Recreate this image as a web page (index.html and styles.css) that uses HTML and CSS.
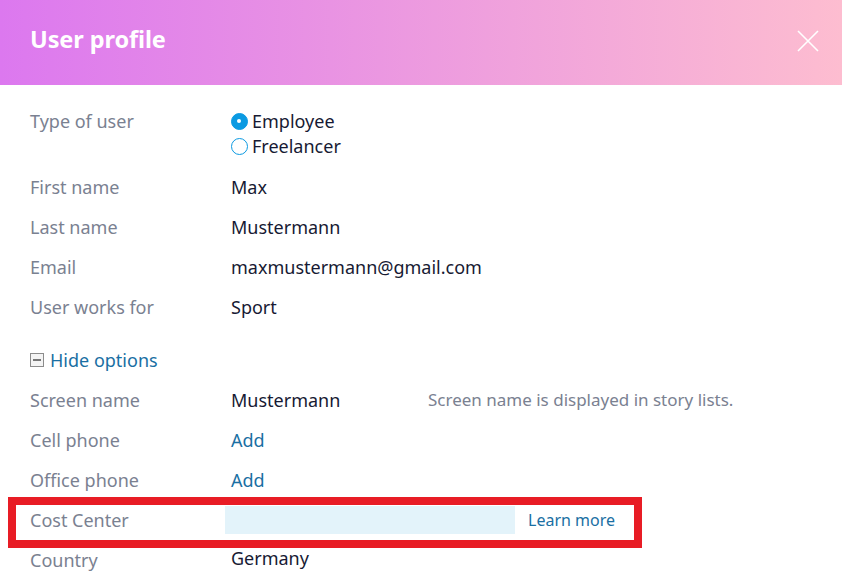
FILE: index.html
```html
<!DOCTYPE html>
<html lang="en">
<head>
  <meta charset="UTF-8" />
  <title>User profile</title>
  <link rel="stylesheet" href="styles.css">
</head>
<body>
  <div class="dialog">
    <header>
      <h1>User profile</h1>
      <button class="close" aria-label="Close">
        <svg width="24" height="24" viewBox="0 0 24 24">
          <path d="M2 2 L22 22 M22 2 L2 22" stroke="#fff" stroke-width="1.6" fill="none" />
        </svg>
      </button>
    </header>

    <div class="form">
      <div class="row">
        <div class="label">Type of user</div>
        <div class="value radios">
          <label class="radio"><span class="dot checked"></span>Employee</label>
          <label class="radio"><span class="dot"></span>Freelancer</label>
        </div>
      </div>
      <div class="row">
        <div class="label">First name</div>
        <div class="value">Max</div>
      </div>
      <div class="row">
        <div class="label">Last name</div>
        <div class="value">Mustermann</div>
      </div>
      <div class="row">
        <div class="label">Email</div>
        <div class="value">maxmustermann@gmail.com</div>
      </div>
      <div class="row">
        <div class="label">User works for</div>
        <div class="value">Sport</div>
      </div>

      <div class="toggle">
        <span class="minus"></span>
        <a href="#">Hide options</a>
      </div>

      <div class="row">
        <div class="label">Screen name</div>
        <div class="value split">
          <span class="main">Mustermann</span>
          <span class="hint">Screen name is displayed in story lists.</span>
        </div>
      </div>
      <div class="row">
        <div class="label">Cell phone</div>
        <div class="value"><a href="#">Add</a></div>
      </div>
      <div class="row">
        <div class="label">Office phone</div>
        <div class="value"><a href="#">Add</a></div>
      </div>
      <div class="row highlight">
        <div class="label">Cost Center</div>
        <div class="value cost">
          <input type="text" />
          <a href="#" class="small">Learn more</a>
        </div>
      </div>
      <div class="row">
        <div class="label">Country</div>
        <div class="value country">Germany</div>
      </div>
    </div>
  </div>
</body>
</html>
```

FILE: styles.css
```css
:root {
  --label: #7a8191;
  --text: #171a33;
  --link: #1a6fa3;
  --blue: #0b9ae2;
}

*,
*::before,
*::after {
  box-sizing: border-box;
}

body {
  margin: 0;
  font-family: "Noto Sans", "Open Sans", sans-serif;
  background: #fff;
  color: var(--text);
  overflow: hidden;
}

.dialog {
  width: 842px;
  height: 584px;
  overflow: hidden;
}

header {
  height: 85px;
  background: linear-gradient(90deg, #dc78ef, #fdbdd0);
  display: flex;
  align-items: center;
  justify-content: space-between;
  padding: 0 22px 8px 30px;
}

header h1 {
  margin: 0;
  color: #fff;
  font-size: 23.5px;
  font-weight: 700;
  letter-spacing: -0.1px;
}

.close {
  background: none;
  border: none;
  padding: 0;
  margin-top: 4px;
  display: flex;
  cursor: pointer;
}

.form {
  padding: 16px 30px 0;
}

.row {
  display: flex;
  padding: 8px 0;
  line-height: 24px;
  font-size: 18px;
}

.label {
  width: 201px;
  flex: none;
  color: var(--label);
}

.value {
  flex: 1;
  color: var(--text);
}

.value a,
.toggle a {
  color: var(--link);
  text-decoration: none;
}

.radios {
  display: flex;
  flex-direction: column;
}

.radio {
  display: flex;
  align-items: center;
  line-height: 25px;
}

.dot {
  width: 17px;
  height: 17px;
  border-radius: 50%;
  border: 1.5px solid var(--blue);
  background: #fff;
  margin-right: 4px;
  position: relative;
}

.dot.checked {
  background: var(--blue);
}

.dot.checked::after {
  content: "";
  position: absolute;
  left: 5px;
  top: 5px;
  width: 4px;
  height: 4px;
  border-radius: 50%;
  background: #fff;
}

.toggle {
  display: flex;
  align-items: center;
  margin-top: 13px;
  padding: 8px 0;
  line-height: 24px;
  font-size: 18px;
}

.minus {
  width: 14px;
  height: 14px;
  border: 1px solid #8c8c8c;
  background: #f4f4f4;
  margin-right: 6px;
  position: relative;
}

.minus::after {
  content: "";
  position: absolute;
  left: 2px;
  right: 2px;
  top: 5px;
  height: 2px;
  background: #777;
}

.split {
  display: flex;
}

.split .main {
  width: 197px;
  flex: none;
}

.hint {
  color: var(--label);
  font-size: 17px;
}

.highlight {
  position: relative;
}

.highlight::after {
  content: "";
  position: absolute;
  left: -22px;
  top: -3px;
  width: 634px;
  height: 51px;
  border: 8px solid #e81c25;
  pointer-events: none;
}

.cost {
  display: flex;
  align-items: center;
  margin-left: -6px;
}

.cost input {
  width: 290px;
  height: 28px;
  border: none;
  background: #e3f3fa;
  margin: -2px 13px -2px 0;
  outline: none;
}

.small {
  font-size: 16px;
}

.country {
  margin-top: -2px;
}
```
